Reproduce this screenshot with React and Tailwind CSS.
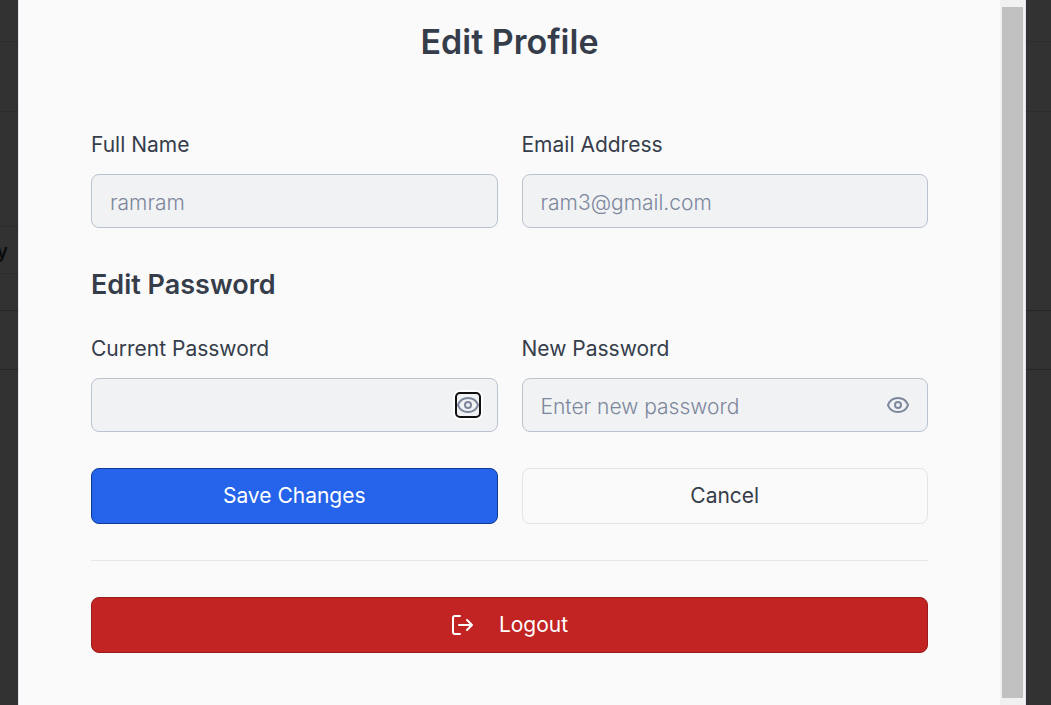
import { Eye } from "lucide-react";

function Field({ id, label, type = "text", placeholder, focusedToggle }) {
  const secret = type === "password";
  return (
    <div className="flex min-w-0 flex-col gap-3.5">
      <label htmlFor={id} className="text-[21px] leading-[30px] text-[#363d4a]">
        {label}
      </label>
      <div className="flex h-[54px] items-center rounded-lg border border-[#bac1d0] bg-[#f0f2f4] pl-[18px] pr-[17px]">
        <input
          id={id}
          type={type}
          placeholder={placeholder}
          className="h-full min-w-0 flex-1 bg-transparent pt-0.5 text-[21px] font-light text-[#7d879c] outline-none placeholder:text-[#7d879c]"
        />
        {secret && (
          <button
            type="button"
            aria-label={"Show " + label.toLowerCase()}
            className={
              focusedToggle
                ? "rounded-sm text-[#7d879c] outline-2 -outline-offset-1 outline-[#101010] ring-3 ring-white"
                : "text-[#7d879c]"
            }
          >
            <Eye size={24} strokeWidth={2} />
          </button>
        )}
      </div>
    </div>
  );
}

function LogoutIcon() {
  return (
    <svg width="24" height="24" viewBox="0 0 24 24" fill="none" stroke="currentColor" strokeWidth="2" strokeLinecap="round" strokeLinejoin="round" aria-hidden="true">
      <path d="M9 3H4a2 2 0 0 0-2 2v14a2 2 0 0 0 2 2h5" />
      <path d="M8 12h13M16 7l5 5-5 5" />
    </svg>
  );
}

function Backdrop() {
  return (
    <div className="col-start-1 row-start-1 flex flex-col bg-[#323232]" aria-hidden="true">
      <div className="h-[42px] border-b border-[#2c2c2c]" />
      <div className="h-[70px] border-b border-[#2c2c2c]" />
      <div className="h-[115px] w-6 border-b border-[#2c2c2c]" />
      <div className="flex h-[47px] w-6 items-center border-b border-[#2c2c2c] pt-1 text-[19px] font-semibold leading-6 text-[#0b0b0c]">
        <span className="flex w-2 justify-end">y</span>
      </div>
      <div className="h-[37px] border-b border-[#262626]" />
      <div className="h-[59px] border-b border-[#262626]" />
    </div>
  );
}

export default function App() {
  return (
    <div className="grid min-h-screen overflow-hidden font-['Inter',sans-serif]">
      <Backdrop />
      <div
        role="dialog"
        aria-labelledby="profile-title"
        className="z-10 col-start-1 row-start-1 ml-[18px] mr-[25px] flex border-x border-[#e2e3ec] bg-[#fafafa]"
      >
        <form className="min-w-0 flex-1 px-[72px] pb-9 pt-[18px]" onSubmit={(e) => e.preventDefault()}>
          <h1 id="profile-title" className="mb-16 text-center text-[34px] font-semibold leading-[48px] text-[#363d4a]">
            Edit Profile
          </h1>
          <div className="grid grid-cols-2 gap-6">
            <Field id="name" label="Full Name" placeholder="ramram" />
            <Field id="email" label="Email Address" type="email" placeholder="ram3@gmail.com" />
          </div>
          <h2 className="mb-7 mt-9 text-[27px] font-semibold leading-[42px] text-[#363d4a]">Edit Password</h2>
          <div className="grid grid-cols-2 gap-6">
            <Field id="current" label="Current Password" type="password" focusedToggle />
            <Field id="new" label="New Password" type="password" placeholder="Enter new password" />
          </div>
          <div className="mt-9 grid grid-cols-2 gap-6 text-[21px]">
            <button type="submit" className="h-14 rounded-lg border border-[#113b92] bg-[#2563eb] text-white">
              Save Changes
            </button>
            <button type="button" className="h-14 rounded-lg border border-[#e2e4e9] text-[#363d4a]">
              Cancel
            </button>
          </div>
          <hr className="my-9 border-[#e5e7eb]" />
          <button
            type="button"
            className="flex h-14 w-full items-center justify-center gap-6 rounded-lg border border-[#991b1b] bg-[#c22323] text-[21px] text-white"
          >
            <LogoutIcon />
            Logout
          </button>
        </form>
        <div className="flex w-[25px] bg-[#f1f1f1] px-0.5 py-[7px]" aria-hidden="true">
          <div className="flex-1 bg-[#c1c1c1]" />
        </div>
      </div>
    </div>
  );
}
